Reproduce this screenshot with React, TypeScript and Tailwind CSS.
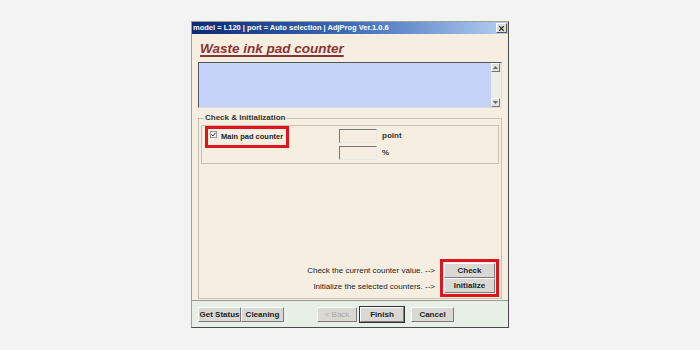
import React from "react";

const font = { fontFamily: '"Liberation Sans", Arial, sans-serif' };

function WinButton({
  label,
  className = "",
  disabled = false,
  isDefault = false,
}: {
  label: string;
  className?: string;
  disabled?: boolean;
  isDefault?: boolean;
}) {
  return (
    <div
      className={`flex h-[15px] items-center justify-center border border-t-white border-l-white border-r-[#7a7a7a] border-b-[#7a7a7a] bg-[#dad8d2] text-[8px] ${
        disabled ? "text-[#a8a8a8]" : "font-bold text-[#222]"
      } ${isDefault ? "outline outline-1 outline-[#333]" : ""} ${className}`}
    >
      {label}
    </div>
  );
}

function ScrollArrow({ up }: { up?: boolean }) {
  return (
    <div className="flex h-[9px] w-[9px] items-center justify-center border border-t-white border-l-white border-r-[#777] border-b-[#777] bg-[#e4e2dc]">
      <svg width="5" height="3" viewBox="0 0 5 3">
        <path d={up ? "M0 3 L2.5 0 L5 3 Z" : "M0 0 L2.5 3 L5 0 Z"} fill="#666" />
      </svg>
    </div>
  );
}

export default function App() {
  return (
    <div className="h-[350px] w-[700px] bg-[#f3f3f3] pl-[191px] pt-[21px]" style={font}>
      <div className="flex h-[307px] w-[318px] flex-col border border-[#9aa39a] border-r-[#4a4a4a] border-b-[#4a4a4a] bg-[#e8efe6]">
        {/* Title bar */}
        <div className="flex h-[12px] items-center justify-between bg-gradient-to-r from-[#0b2a72] via-[#3f6cb8] to-[#b6d0f2] pl-[1px] pr-[1px]">
          <span className="whitespace-nowrap text-[7.5px] font-bold leading-none text-white">
            model = L120 | port = Auto selection | AdjProg Ver.1.0.6
          </span>
          <div className="flex h-[10px] w-[11px] items-center justify-center border border-t-white border-l-white border-r-[#555] border-b-[#555] bg-[#dedcd6]">
            <svg width="5" height="5" viewBox="0 0 5 5">
              <path d="M0 0 L5 5 M5 0 L0 5" stroke="#222" strokeWidth="1.2" />
            </svg>
          </div>
        </div>

        {/* Main cream panel */}
        <div className="flex h-[267px] flex-col border-b border-[#9b9b8f] bg-[#f6eee0] px-[6px]">
          <div className="pl-[2px] pt-[2px]">
            <span className="text-[13.5px] font-bold italic leading-[18px] text-[#8a3535] underline decoration-[1.5px] underline-offset-[2px] [text-decoration-skip-ink:none]">
              Waste ink pad counter
            </span>
          </div>

          {/* Log box */}
          <div className="mt-[2px] flex h-[46px] border border-t-[#555] border-l-[#555] border-r-[#ddd] border-b-[#ddd]">
            <div className="flex-1 bg-[#c6d3f8]" />
            <div className="flex w-[10px] flex-col justify-between bg-[#eeece6]">
              <ScrollArrow up />
              <ScrollArrow />
            </div>
          </div>

          {/* Group */}
          <div className="mb-[1px] mt-[10px] flex flex-1 flex-col border border-[#c9c2b3] px-[2px] pb-[1px]">
            <span className="-mt-[6px] ml-[3px] w-fit bg-[#f6eee0] px-[1px] text-[8px] font-bold leading-[10px] text-[#333]">
              Check &amp; Initialization
            </span>
            <div className="mt-[2px] flex h-[39px] border border-[#c9c2b3]">
              <div className="ml-[3px] flex h-[22px] w-[84px] items-center gap-[4px] border-[3px] border-[#e0141c] pl-[2px]">
                <div className="mb-[6px] flex h-[7px] w-[7px] shrink-0 items-center justify-center border border-[#999] bg-[#f3f1ec]">
                  <svg width="5" height="5" viewBox="0 0 5 5">
                    <path d="M0.5 2.5 L2 4 L4.6 0.8" stroke="#333" strokeWidth="1" fill="none" />
                  </svg>
                </div>
                <span className="whitespace-nowrap text-[7.5px] font-bold text-[#222]">Main pad counter</span>
              </div>
              <div className="ml-[50px] mt-[3px] flex flex-col gap-[3px]">
                <div className="flex items-center gap-[5px]">
                  <div className="h-[14px] w-[38px] border border-t-[#777] border-l-[#777] border-r-[#e8e8e8] border-b-[#e8e8e8] bg-[#f4ede0]" />
                  <span className="text-[8px] font-bold text-[#333]">point</span>
                </div>
                <div className="flex items-center gap-[5px]">
                  <div className="h-[14px] w-[38px] border border-t-[#777] border-l-[#777] border-r-[#e8e8e8] border-b-[#e8e8e8] bg-[#f4ede0]" />
                  <span className="text-[8px] font-bold text-[#333]">%</span>
                </div>
              </div>
            </div>

            <div className="mt-auto flex items-center justify-end">
              <div className="mr-[5px] flex flex-col items-end gap-[4px] pt-[2px] text-[8px] text-[#222]">
                <span>Check the current counter value. --&gt;</span>
                <span>Initialize the selected counters. --&gt;</span>
              </div>
              <div className="flex flex-col border-[3px] border-[#e0141c] p-[1px]">
                <WinButton label="Check" className="w-[51px]" />
                <WinButton label="Initialize" className="w-[51px]" />
              </div>
            </div>
          </div>
        </div>

        {/* Bottom buttons */}
        <div className="flex items-center pl-[6px] pt-[6px]">
          <WinButton label="Get Status" className="w-[43px]" />
          <WinButton label="Cleaning" className="w-[43px]" />
          <WinButton label="< Back" className="ml-[33px] w-[40px]" disabled />
          <WinButton label="Finish" className="ml-[3px] w-[44px]" isDefault />
          <WinButton label="Cancel" className="ml-[7px] w-[43px]" />
        </div>
      </div>
    </div>
  );
}
